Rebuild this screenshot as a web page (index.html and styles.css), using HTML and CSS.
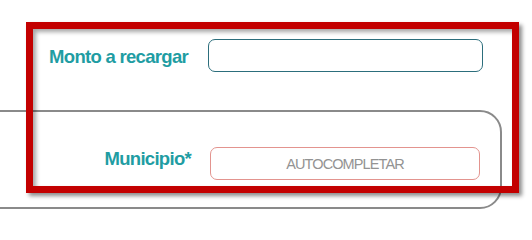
FILE: index.html
```html
<!DOCTYPE html>
<html lang="es">
<head>
<meta charset="utf-8">
<title>Recarga</title>
<link rel="stylesheet" href="styles.css">
</head>
<body>
<div class="page">
  <div class="row row-amount">
    <label class="label label-amount" for="monto">Monto a recargar</label>
    <input class="field field-amount" id="monto" type="text">
  </div>
  <div class="card">
    <div class="row row-city">
      <label class="label label-city" for="municipio">Municipio*</label>
      <input class="field field-city" id="municipio" type="text" placeholder="AUTOCOMPLETAR">
    </div>
  </div>
  <div class="highlight"></div>
</div>
</body>
</html>
```

FILE: styles.css
```css
* { box-sizing: border-box; }
html, body { margin: 0; padding: 0; background: #ffffff; overflow: hidden; }
body { width: 532px; height: 224px; font-family: "Liberation Sans", Arial, sans-serif; }

.page {
  position: relative;
  width: 532px;
  height: 224px;
  padding-top: 39px;
}

.row {
  display: grid;
  align-items: start;
}

.row-amount {
  grid-template-columns: 188px 275px;
  column-gap: 20px;
}

.label {
  color: #1f9da3;
  font-weight: bold;
  font-size: 18.5px;
  line-height: 20px;
  letter-spacing: -0.7px;
  text-align: right;
  white-space: nowrap;
}

.label-amount { margin-top: 8px; }
.label-city { margin-top: 2px; }

.field {
  height: 33px;
  border-radius: 7px;
  background: #fff;
  outline: none;
  font-family: "Liberation Sans", Arial, sans-serif;
}

.field-amount {
  border: 1px solid #2c6e7c;
}

.card {
  margin-top: 38px;
  margin-left: -20px;
  width: 522px;
  height: 99px;
  border: 2px solid #8a8a8a;
  border-radius: 0 22px 22px 0;
  padding-top: 35px;
}

.row-city {
  grid-template-columns: 209px 270px;
  column-gap: 19px;
}

.field-city {
  border: 1px solid #e3948f;
  text-align: center;
  font-size: 14.5px;
  letter-spacing: -0.9px;
  color: #929292;
}
.field-city::placeholder { color: #939393; opacity: 1; }

.highlight {
  position: absolute;
  left: 26px;
  top: 22px;
  width: 493px;
  height: 171px;
  border: 7px solid #c30000;
  box-shadow: 3px 3px 4px rgba(0,0,0,0.45), inset 3px 3px 4px rgba(0,0,0,0.35);
  pointer-events: none;
}
```
